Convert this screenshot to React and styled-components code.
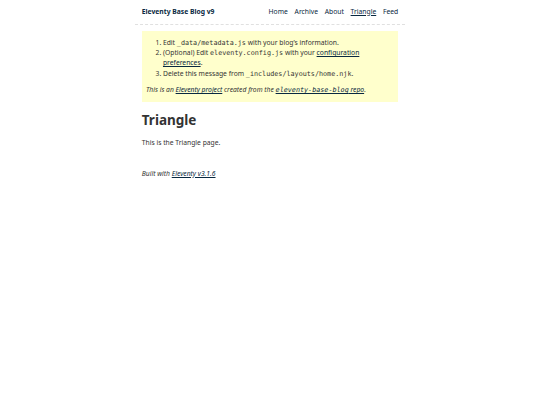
import React from "react";
import styled, { createGlobalStyle } from "styled-components";

const GlobalStyle = createGlobalStyle`
  html {
    font-size: 6.75px;
    overflow-y: scroll;
  }
  html, body {
    padding: 0;
    margin: 0 auto;
    font-family: "Noto Sans", "DejaVu Sans", sans-serif;
    color: #333;
    background-color: #fff;
  }
  body {
    max-width: 40em;
  }
`;

const Header = styled.header`
  display: flex;
  gap: 1em;
  flex-wrap: wrap;
  justify-content: space-between;
  align-items: center;
  padding: 1em;
  border-bottom: 1px dashed #e0e0e0;
  line-height: 1.5;
`;

const HomeLink = styled.a`
  flex-grow: 1;
  font-size: 1em;
  font-weight: 700;
  color: #082840;
  text-decoration: none;
`;

const Nav = styled.ul`
  display: flex;
  gap: 0.5em 1em;
  padding: 0;
  margin: 0;
  list-style: none;
`;

const NavLink = styled.a`
  color: #082840;
  text-decoration: ${(p) => (p.$current ? "underline" : "none")};
`;

const Main = styled.main`
  padding: 1rem;
`;

const MessageBox = styled.div`
  background-color: #ffc;
  color: #333;
  padding: 1em 0.625em;

  ol {
    margin: 0 0 1em;
    padding-left: 17px;
  }
  li {
    line-height: 1.5;
  }
  p {
    margin: 0;
    line-height: 1.5;
  }
`;

const Link = styled.a`
  color: #082840;
`;

const Code = styled.code`
  font-family: "DejaVu Sans Mono", "Liberation Mono", monospace;
  font-size: 1em;
  word-break: break-all;
`;

const Title = styled.h1`
  font-size: 2em;
  margin: 0.67em 0;
`;

const Text = styled.p`
  line-height: 1.5;
  margin: 0;
`;

const Footer = styled.footer`
  padding: 1rem;

  p {
    margin: 1em 0 0;
    line-height: 1.5;
  }
`;

const navItems = ["Home", "Archive", "About", "Triangle", "Feed"];

export default function App() {
  return (
    <>
      <GlobalStyle />
      <Header>
        <HomeLink href="#">Eleventy Base Blog v9</HomeLink>
        <nav>
          <Nav>
            {navItems.map((item) => (
              <li key={item}>
                <NavLink href="#" $current={item === "Triangle"}>
                  {item}
                </NavLink>
              </li>
            ))}
          </Nav>
        </nav>
      </Header>
      <Main>
        <MessageBox>
          <ol>
            <li>
              Edit <Code>_data/metadata.js</Code> with your blog’s information.
            </li>
            <li>
              (Optional) Edit <Code>eleventy.config.js</Code> with your{" "}
              <Link href="#">configuration preferences</Link>.
            </li>
            <li>
              Delete this message from <Code>_includes/layouts/home.njk</Code>.
            </li>
          </ol>
          <p>
            <em>
              This is an <Link href="#">Eleventy project</Link> created from the{" "}
              <Link href="#">
                <Code>eleventy-base-blog</Code> repo
              </Link>
              .
            </em>
          </p>
        </MessageBox>
        <Title>Triangle</Title>
        <Text>This is the Triangle page.</Text>
      </Main>
      <Footer>
        <p>
          <em>
            Built with <Link href="#">Eleventy v3.1.6</Link>
          </em>
        </p>
      </Footer>
    </>
  );
}
